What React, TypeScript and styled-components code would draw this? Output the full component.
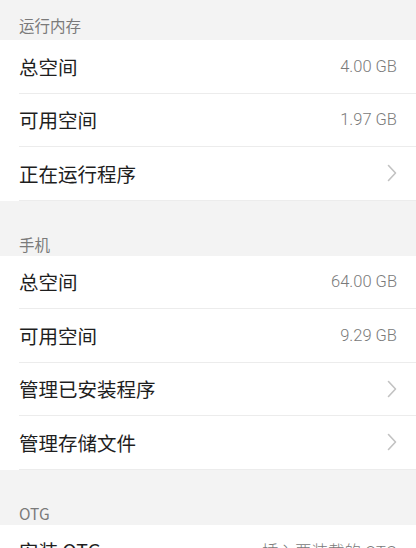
import React from 'react'
import styled, { createGlobalStyle } from 'styled-components'

const GlobalStyle = createGlobalStyle`
    html, body {
        margin: 0;
        padding: 0;
        background: #f3f3f3;
        font-family: "Noto Sans CJK SC", "Noto Sans", sans-serif;
        -webkit-font-smoothing: antialiased;
    }
`

type Item = {
    label: string
    value?: string
    link?: boolean
}

type Section = {
    title: string
    first?: boolean
    items: Item[]
}

const sections: Section[] = [
    {
        title: '运行内存',
        first: true,
        items: [
            { label: '总空间', value: '4.00 GB' },
            { label: '可用空间', value: '1.97 GB' },
            { label: '正在运行程序', link: true },
        ],
    },
    {
        title: '手机',
        items: [
            { label: '总空间', value: '64.00 GB' },
            { label: '可用空间', value: '9.29 GB' },
            { label: '管理已安装程序', link: true },
            { label: '管理存储文件', link: true },
        ],
    },
    {
        title: 'OTG',
        items: [{ label: '安装 OTG', value: '插入要装载的 OTG' }],
    },
]

const Chevron = () => (
    <svg width="10" height="18" viewBox="0 0 10 18" fill="none">
        <path
            d="M1.5 1.5 L8.5 9 L1.5 16.5"
            stroke="#c2c2c2"
            strokeWidth="1.6"
            strokeLinecap="round"
            strokeLinejoin="round"
        />
    </svg>
)

export default function App(): JSX.Element {
    return (
        <Page>
            <GlobalStyle />
            {sections.map((section) => (
                <Group key={section.title}>
                    <Header first={section.first}>{section.title}</Header>
                    <List>
                        {section.items.map((item) => (
                            <Row key={item.label}>
                                <Label>{item.label}</Label>
                                {item.value && <Value>{item.value}</Value>}
                                {item.link && <Chevron />}
                            </Row>
                        ))}
                    </List>
                </Group>
            ))}
        </Page>
    )
}

const Page = styled.div`
    width: 416px;
    height: 548px;
    overflow: hidden;
    background: #f3f3f3;
`

const Group = styled.section`
    display: flex;
    flex-direction: column;
`

const Header = styled.div<{ first?: boolean }>`
    box-sizing: border-box;
    height: ${(p) => (p.first ? '40px' : '55px')};
    display: flex;
    align-items: flex-end;
    padding: 0 19px ${(p) => (p.first ? '4px' : '1px')};
    font-size: 15.5px;
    color: #7a7a7a;
`

const List = styled.div`
    background: #fff;
`

const Row = styled.div`
    box-sizing: border-box;
    height: 53.5px;
    margin-left: 19px;
    padding-right: 19px;
    display: flex;
    align-items: center;
    border-bottom: 1px solid #ececec;
`

const Label = styled.div`
    flex: 1;
    font-size: 19.5px;
    color: #1e1e1e;
`

const Value = styled.div`
    font-family: "Roboto", "Noto Sans CJK SC", sans-serif;
    font-weight: 300;
    font-size: 16.5px;
    color: #7a7a7a;
`
